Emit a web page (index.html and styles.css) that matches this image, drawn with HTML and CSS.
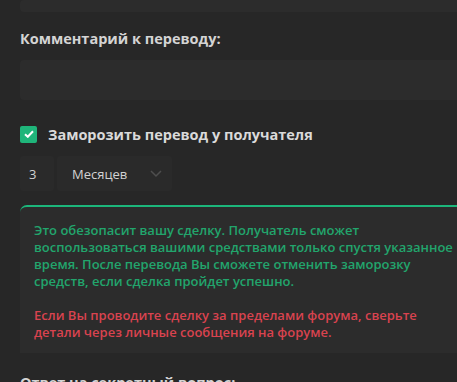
FILE: index.html
```html
<!DOCTYPE html>
<html lang="ru">
<head>
    <meta charset="UTF-8">
    <title>Перевод</title>
    <link rel="stylesheet" href="styles.css">
</head>
<body>
    <div class="form">
        <div class="input prev-input"></div>

        <div class="label">Комментарий к переводу:</div>
        <div class="input comment-input"></div>

        <label class="check-row">
            <span class="checkbox">
                <svg width="10" height="8" viewBox="0 0 10 8"><path d="M1 4.2 L3.8 6.8 L9 1.2" fill="none" stroke="#ffffff" stroke-width="2"/></svg>
            </span>
            <span class="check-text">Заморозить перевод у получателя</span>
        </label>

        <div class="freeze-row">
            <div class="field num-field">3</div>
            <div class="field select-field">
                <span>Месяцев</span>
                <svg width="12" height="8" viewBox="0 0 12 8"><path d="M1 1 L6 6 L11 1" fill="none" stroke="#4e4e4e" stroke-width="1.5"/></svg>
            </div>
        </div>

        <div class="notice">
            <p class="notice-ok">Это обезопасит вашу сделку. Получатель сможет воспользоваться вашими средствами только спустя указанное время. После перевода Вы сможете отменить заморозку средств, если сделка пройдет успешно.</p>
            <p class="notice-warn">Если Вы проводите сделку за пределами форума, сверьте детали через личные сообщения на форуме.</p>
        </div>

        <div class="label last-label">Ответ на секретный вопрос:</div>
    </div>
</body>
</html>
```

FILE: styles.css
```css
body {
    margin: 0;
    padding: 0;
    background: #272727;
    font-family: 'Open Sans', 'Liberation Sans', sans-serif;
    color: #d6d6d6;
    overflow: hidden;
}
.form {
    padding-left: 20px;
}
.input {
    background: #2c2c2c;
    border-radius: 4px 0 0 4px;
}
.prev-input {
    height: 12px;
}
.label {
    font-size: 14.5px;
    font-weight: 700;
    color: #d4d4d4;
    margin-top: 17px;
    line-height: 20px;
}
.comment-input {
    height: 40px;
    margin-top: 11px;
}
.check-row {
    display: flex;
    align-items: center;
    gap: 11px;
    margin-top: 24px;
    height: 20px;
}
.checkbox {
    width: 17px;
    height: 17px;
    background: #1fb57a;
    border-radius: 2px;
    display: flex;
    align-items: center;
    justify-content: center;
}
.check-text {
    font-size: 14.5px;
    font-weight: 700;
    color: #dadada;
}
.freeze-row {
    display: flex;
    gap: 3px;
    margin-top: 12px;
}
.field {
    background: #2a2a2a;
    height: 35px;
    display: flex;
    align-items: center;
    font-size: 13px;
    color: #d2d2d2;
    border-radius: 3px;
}
.num-field {
    width: 25px;
    padding-left: 9px;
}
.select-field {
    box-sizing: border-box;
    width: 115px;
    padding-left: 15px;
    padding-right: 10px;
    justify-content: space-between;
}
.notice {
    margin-top: 14px;
    margin-right: -40px;
    background: #2c2c2c;
    border-top: 2px solid #1cb67b;
    border-radius: 7px 0 0 0;
    padding: 15px 14px 12px 14px;
    font-size: 13px;
    font-weight: 600;
    line-height: 17px;
}
.notice p {
    margin: 0;
    max-width: 430px;
}
.notice-ok {
    color: #22a56c;
}
.notice .notice-warn {
    color: #d9434f;
    margin-top: 17px;
}
.last-label {
    margin-top: 20px;
}
```
